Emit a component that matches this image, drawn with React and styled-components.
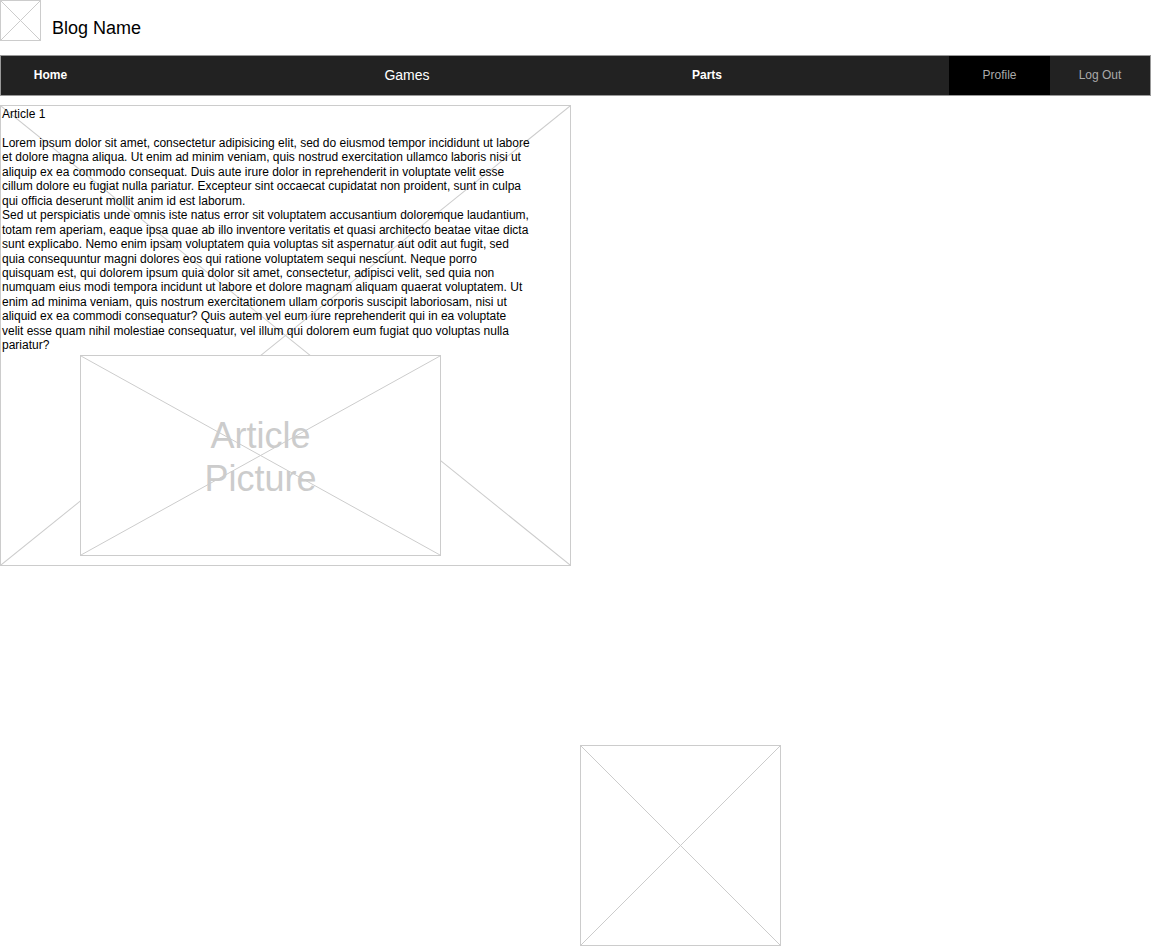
import React from "react";
import styled, { createGlobalStyle } from "styled-components";

const Global = createGlobalStyle`
  html, body { margin: 0; padding: 0; background: #fff; }
  body { font-family: "Liberation Sans", Arial, sans-serif; color: #000; }
`;

const Page = styled.div`
  width: 1152px;
  display: flex;
  flex-direction: column;
`;

const Header = styled.header`
  height: 55px;
  display: flex;
  align-items: flex-start;
  gap: 11px;
`;

const BlogName = styled.h1`
  margin: 18px 0 0;
  font-size: 18px;
  font-weight: normal;
  line-height: 21px;
  color: #000;
`;

const Frame = styled.div`
  position: relative;
  box-sizing: border-box;
  width: ${(p) => p.$w}px;
  height: ${(p) => p.$h}px;
  border: 1px solid #cccccc;
  background: #fff;
`;

const Cross = styled.svg`
  position: absolute;
  inset: 0;
  width: 100%;
  height: 100%;
  pointer-events: none;
`;

function Placeholder({ w, h, children }) {
  return (
    <Frame $w={w} $h={h}>
      <Cross viewBox="0 0 100 100" preserveAspectRatio="none">
        <line x1="0" y1="0" x2="100" y2="100" stroke="#cccccc" strokeWidth="1" vectorEffect="non-scaling-stroke" />
        <line x1="100" y1="0" x2="0" y2="100" stroke="#cccccc" strokeWidth="1" vectorEffect="non-scaling-stroke" />
      </Cross>
      {children}
    </Frame>
  );
}

const Nav = styled.nav`
  box-sizing: border-box;
  width: 1151px;
  height: 41px;
  border: 1px solid #999999;
  background: #222222;
  display: flex;
`;

const NavItem = styled.a`
  flex: none;
  box-sizing: border-box;
  width: ${(p) => p.$w}px;
  margin-left: ${(p) => p.$ml || 0}px;
  padding-bottom: 2px;
  display: flex;
  align-items: center;
  justify-content: center;
  font-size: ${(p) => (p.$big ? 14 : 12)}px;
  font-weight: ${(p) => (p.$bold ? "bold" : "normal")};
  color: ${(p) => (p.$muted ? "#aaaaaa" : "#ffffff")};
  background: ${(p) => (p.$active ? "#000000" : "transparent")};
  text-decoration: none;
  cursor: pointer;
`;

const ArticleWrap = styled.div`
  margin-top: 9px;
`;

const ArticleContent = styled.div`
  position: relative;
  padding: 1px 0 0 1px;
`;

const ArticleText = styled.p`
  margin: 0;
  width: 528.5px;
  font-size: 12px;
  line-height: 14.45px;
  white-space: pre-line;
  color: #000;
`;

const PictureBox = styled.div`
  margin: 2px 0 0 78px;
`;

const PictureLabel = styled.div`
  position: absolute;
  inset: 0;
  display: flex;
  align-items: center;
  justify-content: center;
  text-align: center;
  padding-top: 4px;
  font-size: 36px;
  line-height: 43px;
  color: #cccccc;
`;

const Bottom = styled.div`
  margin: 179px 0 0 580px;
`;

const text = `Article 1

Lorem ipsum dolor sit amet, consectetur adipisicing elit, sed do eiusmod tempor incididunt ut labore et dolore magna aliqua. Ut enim ad minim veniam, quis nostrud exercitation ullamco laboris nisi ut aliquip ex ea commodo consequat. Duis aute irure dolor in reprehenderit in voluptate velit esse cillum dolore eu fugiat nulla pariatur. Excepteur sint occaecat cupidatat non proident, sunt in culpa qui officia deserunt mollit anim id est laborum.
Sed ut perspiciatis unde omnis iste natus error sit voluptatem accusantium doloremque laudantium, totam rem aperiam, eaque ipsa quae ab illo inventore veritatis et quasi architecto beatae vitae dicta sunt explicabo. Nemo enim ipsam voluptatem quia voluptas sit aspernatur aut odit aut fugit, sed quia consequuntur magni dolores eos qui ratione voluptatem sequi nesciunt. Neque porro quisquam est, qui dolorem ipsum quia dolor sit amet, consectetur, adipisci velit, sed quia non numquam eius modi tempora incidunt ut labore et dolore magnam aliquam quaerat voluptatem. Ut enim ad minima veniam, quis nostrum exercitationem ullam corporis suscipit laboriosam, nisi ut aliquid ex ea commodi consequatur? Quis autem vel eum iure reprehenderit qui in ea voluptate velit esse quam nihil molestiae consequatur, vel illum qui dolorem eum fugiat quo voluptas nulla pariatur?`;

export default function App() {
  return (
    <Page>
      <Global />
      <Header>
        <Placeholder w={41} h={41} />
        <BlogName>Blog Name</BlogName>
      </Header>
      <Nav>
        <NavItem $w={99} $bold>Home</NavItem>
        <NavItem $w={100} $ml={257} $big>Games</NavItem>
        <NavItem $w={100} $ml={200} $bold>Parts</NavItem>
        <NavItem $w={101} $ml={192} $muted $active>Profile</NavItem>
        <NavItem $w={100} $muted>Log Out</NavItem>
      </Nav>
      <ArticleWrap>
        <Placeholder w={571} h={461}>
          <ArticleContent>
            <ArticleText>{text}</ArticleText>
            <PictureBox>
              <Placeholder w={361} h={201}>
                <PictureLabel>Article<br />Picture</PictureLabel>
              </Placeholder>
            </PictureBox>
          </ArticleContent>
        </Placeholder>
      </ArticleWrap>
      <Bottom>
        <Placeholder w={201} h={201} />
      </Bottom>
    </Page>
  );
}
